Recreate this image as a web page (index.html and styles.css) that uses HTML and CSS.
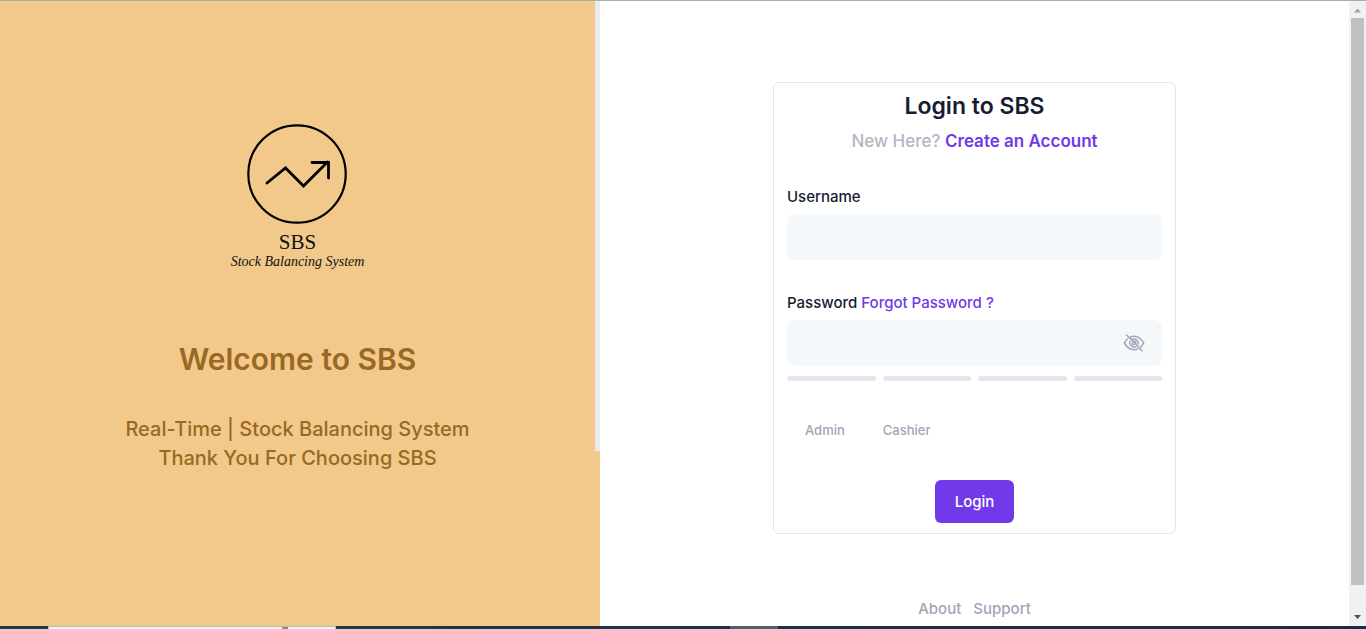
FILE: index.html
```html
<!DOCTYPE html>
<html lang="en">
<head>
<meta charset="utf-8">
<title>Login to SBS</title>
<link rel="stylesheet" href="styles.css">
</head>
<body>
<div class="top-edge"></div>
<div class="viewport">
  <aside class="brand">
    <div class="brand-body">
      <svg class="logo-mark" viewBox="0 0 100 100" fill="none" stroke="#000" aria-hidden="true">
        <circle cx="50" cy="50" r="48.7" stroke-width="2.200"/>
        <path d="M20 59 38.500 44 56.500 62 80.500 38M65 38.500H81.500V54" stroke-width="2.800" stroke-linecap="round"/>
      </svg>
      <p class="logo-name">SBS</p>
      <p class="logo-tagline">Stock Balancing System</p>
      <h1 class="welcome">Welcome to SBS</h1>
      <p class="intro">Real-Time | Stock Balancing System<br>Thank You For Choosing SBS</p>
    </div>
    <div class="brand-scroll"><div class="brand-thumb"></div></div>
  </aside>
  <main class="content">
    <form class="card">
      <h2 class="title">Login to SBS</h2>
      <p class="subtitle">New Here? <a class="link" href="#">Create an Account</a></p>
      <div class="label-row"><label for="username">Username</label></div>
      <input class="field" id="username" type="text">
      <div class="label-row label-row-next"><label for="password">Password</label> <a class="link" href="#">Forgot Password ?</a></div>
      <div class="password">
        <input class="field" id="password" type="password">
        <button class="eye" type="button" aria-label="Show password">
          <svg viewBox="0 0 22 18" fill="none" stroke="#a1a5b7" stroke-width="1.500" stroke-linecap="round" aria-hidden="true">
            <path d="M7 3.100C8.200 2.600 9.500 2.300 11 2.300c4 0 7 2.200 9.700 6.700-.9 1.600-1.900 2.800-3 3.900M14.500 15c-1.100.5-2.200.7-3.500.7-4 0-7-2.200-9.700-6.700 1-1.700 2-3 3.200-4"/>
            <path d="M9.200 5.200C12.800 4 16 7 15.200 10.300M12.700 12.900C9.200 14 6 11 6.800 7.700"/>
            <path d="M11 7.300c1.200 0 1.900.8 1.900 1.900M9.100 9c0 1 .8 1.800 1.800 1.800"/>
            <path d="M3.500 1 19 16.800"/>
          </svg>
        </button>
      </div>
      <div class="strength"><span></span><span></span><span></span><span></span></div>
      <div class="roles">
        <label class="role"><input class="role-input" type="radio" name="role">Admin</label>
        <label class="role"><input class="role-input" type="radio" name="role">Cashier</label>
      </div>
      <button class="submit" type="submit">Login</button>
    </form>
    <footer class="footer"><a href="#">About</a><a href="#">Support</a></footer>
  </main>
  <div class="scrollbar">
    <svg class="arrow" viewBox="0 0 17 17" aria-hidden="true"><path d="M5 11.500h7L8.500 7.500Z" fill="#a3a3a3"/></svg>
    <div class="thumb"></div>
    <svg class="arrow arrow-down" viewBox="0 0 17 17" aria-hidden="true"><path d="M5 6h7L8.500 10Z" fill="#505050"/></svg>
  </div>
</div>
<div class="taskbar"><div class="task-search"><span class="task-dot"></span></div><div class="task-active"></div></div>
</body>
</html>
```
FILE: styles.css
```css
* { box-sizing: border-box; }
body {
  margin: 0;
  min-height: 100vh;
  display: grid;
  grid-template-rows: 1px 1fr 3px;
  background: #fff;
  color: #181c32;
  font-family: Inter, "Open Sans", sans-serif;
  font-weight: 500;
}
h1, h2, p { margin: 0; }
a { color: inherit; text-decoration: none; }
.top-edge { background: #9db59e; }
.viewport { display: flex; }

.brand { flex: 0 0 600px; display: flex; background: #f2c98a; }
.brand-body {
  flex: 1;
  display: flex;
  flex-direction: column;
  align-items: center;
  padding-top: 123px;
  text-align: center;
  color: #986923;
}
.brand-scroll { width: 5px; }
.brand-thumb { height: 72%; background: #e9ebf1; }
.logo-mark { width: 100px; height: 100px; margin-right: 2px; }
.logo-name, .logo-tagline { color: #111; font-family: "Liberation Serif", serif; font-weight: 400; }
.logo-name { margin-top: 7px; font-size: 21px; line-height: 22px; }
.logo-tagline { font-size: 14px; line-height: 18px; font-style: italic; }
.welcome { margin-top: 70px; font-size: 30px; line-height: 36px; font-weight: 600; }
.intro { margin-top: 38px; font-size: 20px; line-height: 29px; }

.content {
  flex: 1;
  display: flex;
  flex-direction: column;
  align-items: center;
  padding: 81px 20px 6px;
}
.card {
  width: 100%;
  max-width: 403px;
  padding: 9px 13px 10px;
  border: 1px solid #e4e4ef;
  border-radius: 6px;
  display: flex;
  flex-direction: column;
}
.title { text-align: center; font-size: 23px; line-height: 28px; font-weight: 600; }
.subtitle { margin-top: 9px; text-align: center; font-size: 17px; line-height: 24px; color: #b5b5c3; }
.link { color: #7239ea; }
.subtitle .link { font-weight: 600; }
.label-row { margin-top: 33px; font-size: 15px; line-height: 22px; }
.label-row-next { margin-top: 32px; }
.field {
  width: 100%;
  height: 46px;
  margin-top: 6px;
  padding: 0 14px;
  border: 0;
  border-radius: 8px;
  background: #f5f8fa;
  font: inherit;
  display: block;
}
.password { position: relative; }
.eye {
  position: absolute;
  top: 6px;
  right: 11px;
  width: 34px;
  height: 46px;
  padding: 0 6px;
  border: 0;
  background: none;
  display: flex;
  align-items: center;
}
.eye svg { width: 22px; height: 18px; }
.strength { display: grid; grid-template-columns: repeat(4, 1fr); gap: 7px; margin-top: 10px; }
.strength span { height: 5px; border-radius: 3px; background: #e4e6ef; }
.roles { display: flex; gap: 38px; margin-top: 38px; padding-left: 18px; font-size: 13px; line-height: 22px; color: #a1a5b7; }
.role { position: relative; }
.role-input { position: absolute; opacity: 0; margin: 0; }
.submit {
  align-self: center;
  margin-top: 39px;
  padding: 0 20px;
  height: 43px;
  border: 0;
  border-radius: 6px;
  background: #7239ea;
  color: #fff;
  font: 500 15px/22px Inter, "Open Sans", sans-serif;
}
.footer { display: flex; gap: 12px; margin-top: auto; font-size: 15px; line-height: 22px; color: #a1a5b7; }

.scrollbar { flex: 0 0 17px; display: flex; flex-direction: column; background: #f1f1f1; }
.arrow { width: 17px; height: 17px; }
.thumb { flex: 1; margin: 0 2px; background: #c1c1c1; }
.arrow-down { margin-top: 24px; }

.taskbar { display: flex; background: linear-gradient(90deg, #213b46, #1b2b48); }
.task-search { width: 288px; margin-left: 48px; border: 1px solid #bbb; border-bottom: 0; background: #f3f3f3; }
.task-dot { display: block; width: 6px; height: 2px; margin-left: 233px; background: #a08478; }
.task-active { width: 48px; margin-left: 394px; background: #50606c; }
```
